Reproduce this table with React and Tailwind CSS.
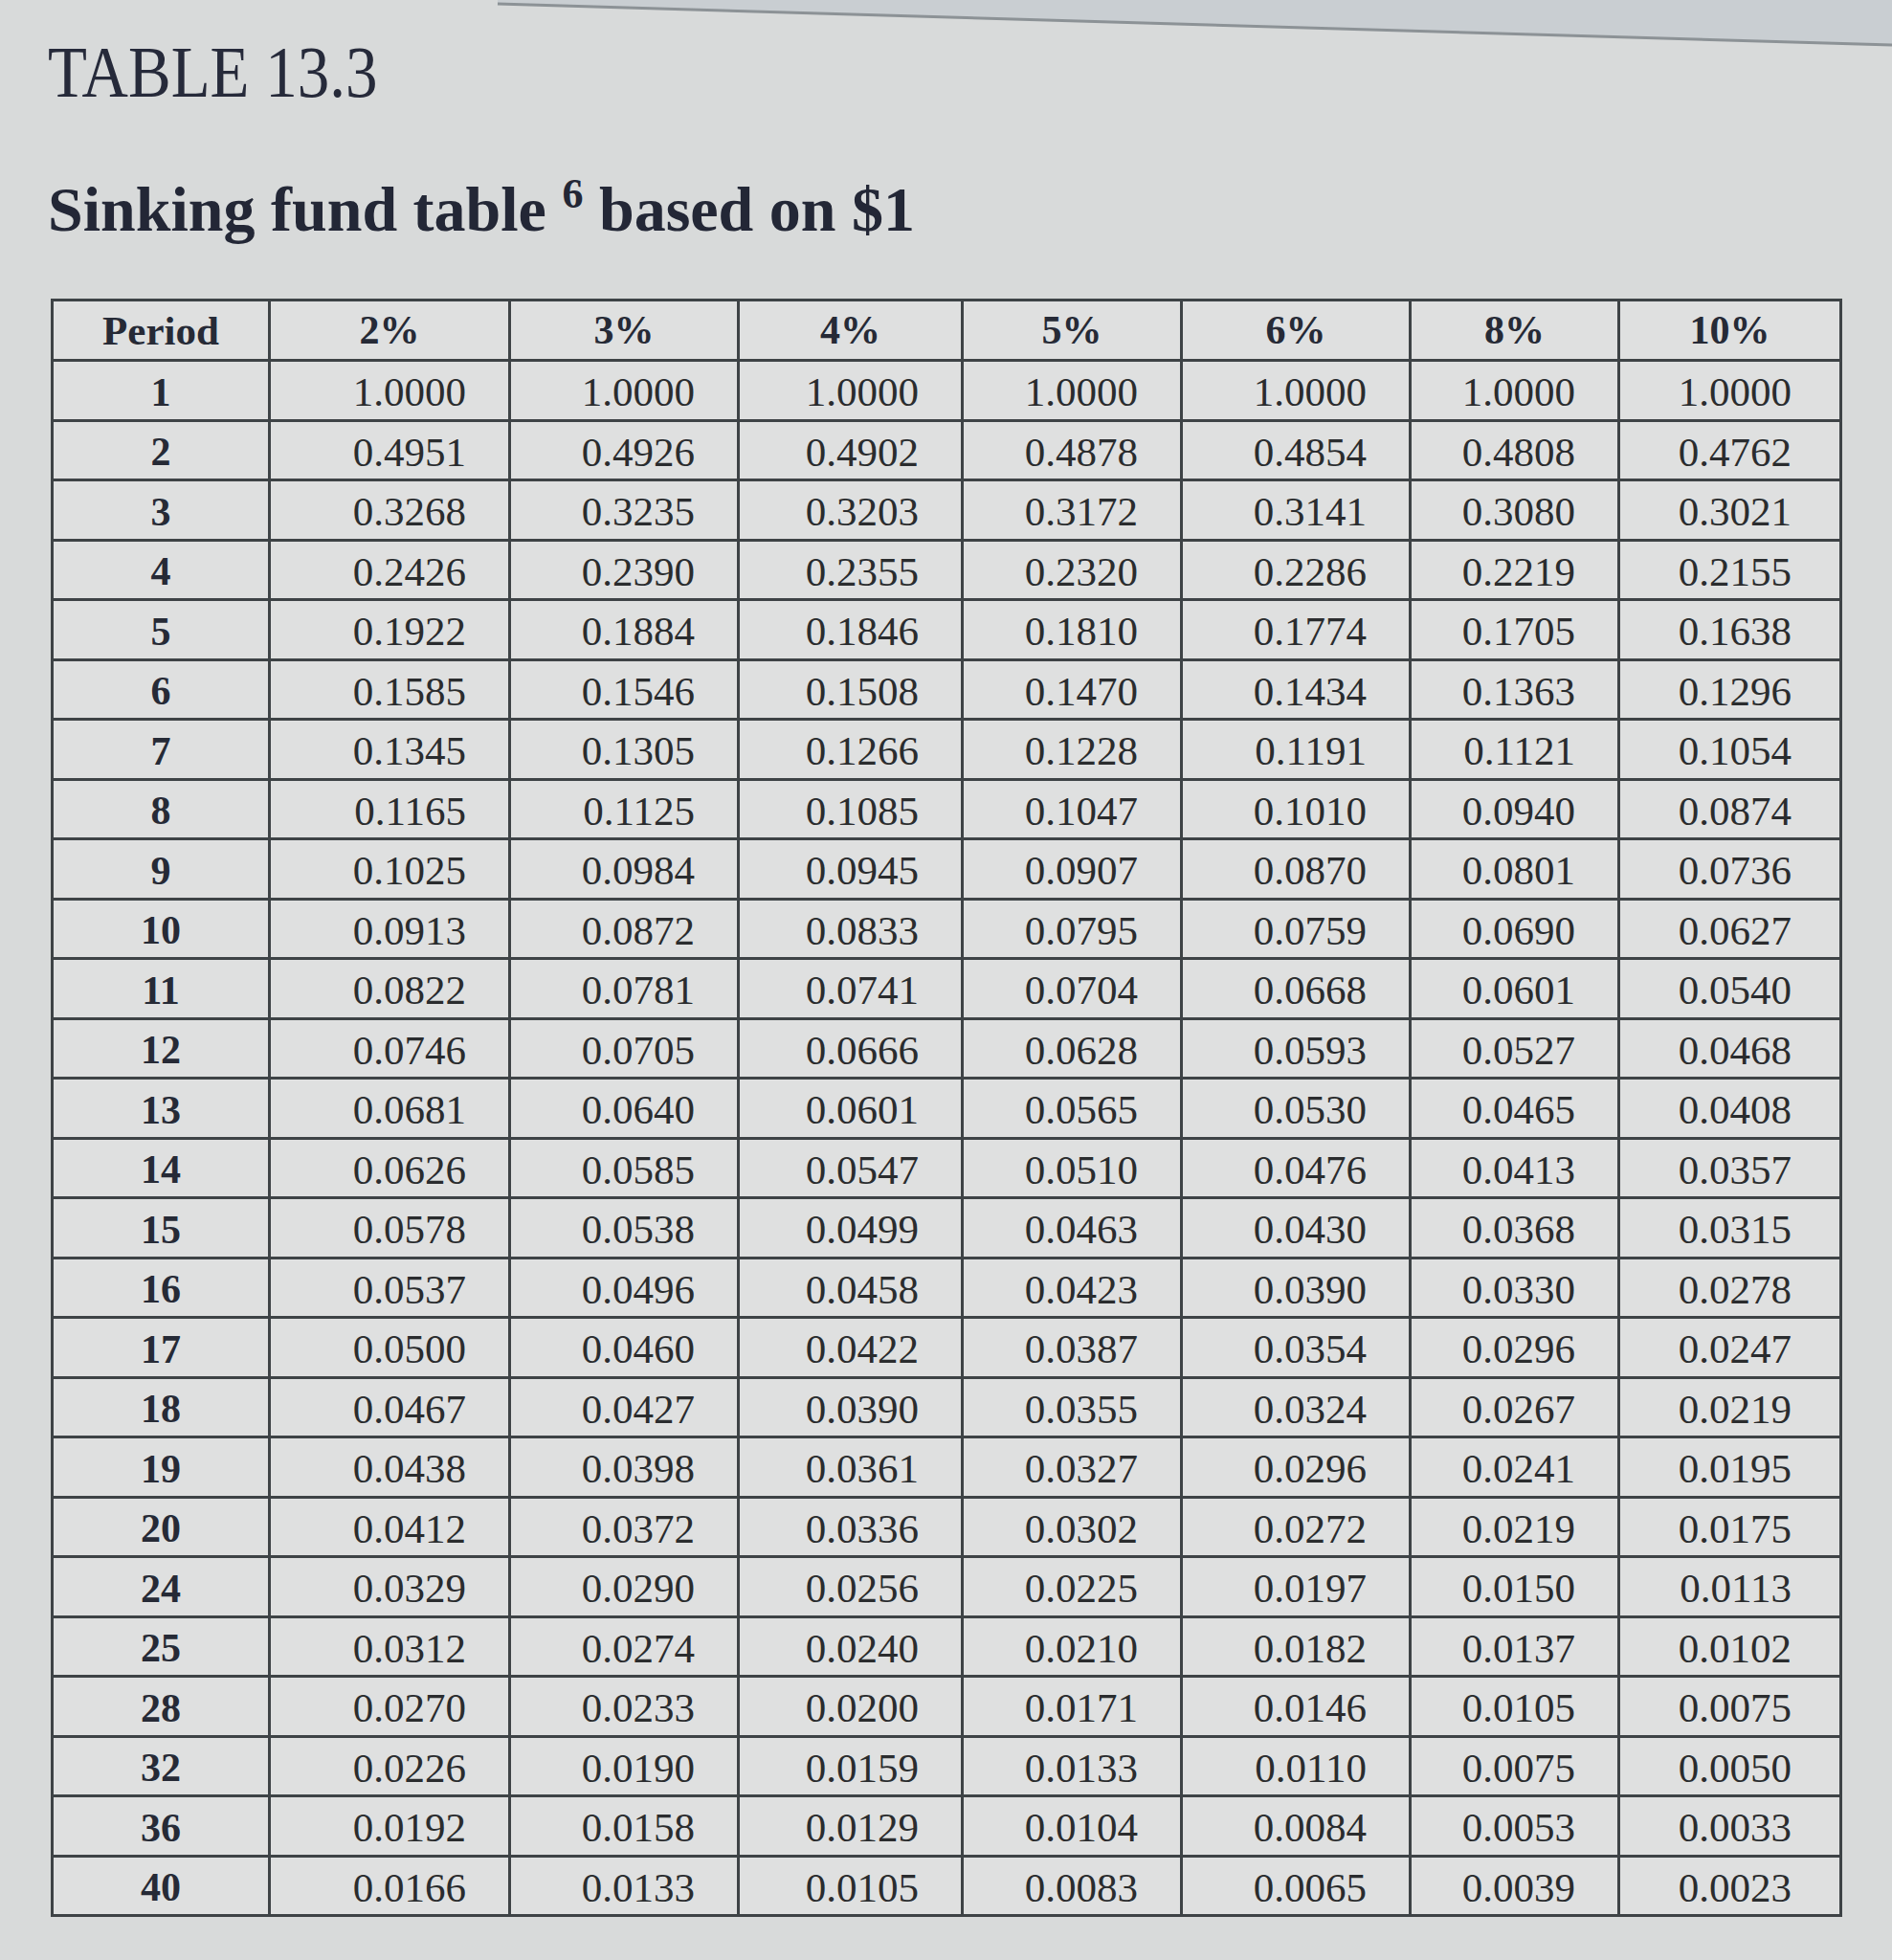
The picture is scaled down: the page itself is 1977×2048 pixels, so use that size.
import React from "react";

const headers = ["2%", "3%", "4%", "5%", "6%", "8%", "10%"];
const widths = [227, 251, 239, 234, 229, 239, 218, 232];

const rows = [
  [1, "1.0000", "1.0000", "1.0000", "1.0000", "1.0000", "1.0000", "1.0000"],
  [2, "0.4951", "0.4926", "0.4902", "0.4878", "0.4854", "0.4808", "0.4762"],
  [3, "0.3268", "0.3235", "0.3203", "0.3172", "0.3141", "0.3080", "0.3021"],
  [4, "0.2426", "0.2390", "0.2355", "0.2320", "0.2286", "0.2219", "0.2155"],
  [5, "0.1922", "0.1884", "0.1846", "0.1810", "0.1774", "0.1705", "0.1638"],
  [6, "0.1585", "0.1546", "0.1508", "0.1470", "0.1434", "0.1363", "0.1296"],
  [7, "0.1345", "0.1305", "0.1266", "0.1228", "0.1191", "0.1121", "0.1054"],
  [8, "0.1165", "0.1125", "0.1085", "0.1047", "0.1010", "0.0940", "0.0874"],
  [9, "0.1025", "0.0984", "0.0945", "0.0907", "0.0870", "0.0801", "0.0736"],
  [10, "0.0913", "0.0872", "0.0833", "0.0795", "0.0759", "0.0690", "0.0627"],
  [11, "0.0822", "0.0781", "0.0741", "0.0704", "0.0668", "0.0601", "0.0540"],
  [12, "0.0746", "0.0705", "0.0666", "0.0628", "0.0593", "0.0527", "0.0468"],
  [13, "0.0681", "0.0640", "0.0601", "0.0565", "0.0530", "0.0465", "0.0408"],
  [14, "0.0626", "0.0585", "0.0547", "0.0510", "0.0476", "0.0413", "0.0357"],
  [15, "0.0578", "0.0538", "0.0499", "0.0463", "0.0430", "0.0368", "0.0315"],
  [16, "0.0537", "0.0496", "0.0458", "0.0423", "0.0390", "0.0330", "0.0278"],
  [17, "0.0500", "0.0460", "0.0422", "0.0387", "0.0354", "0.0296", "0.0247"],
  [18, "0.0467", "0.0427", "0.0390", "0.0355", "0.0324", "0.0267", "0.0219"],
  [19, "0.0438", "0.0398", "0.0361", "0.0327", "0.0296", "0.0241", "0.0195"],
  [20, "0.0412", "0.0372", "0.0336", "0.0302", "0.0272", "0.0219", "0.0175"],
  [24, "0.0329", "0.0290", "0.0256", "0.0225", "0.0197", "0.0150", "0.0113"],
  [25, "0.0312", "0.0274", "0.0240", "0.0210", "0.0182", "0.0137", "0.0102"],
  [28, "0.0270", "0.0233", "0.0200", "0.0171", "0.0146", "0.0105", "0.0075"],
  [32, "0.0226", "0.0190", "0.0159", "0.0133", "0.0110", "0.0075", "0.0050"],
  [36, "0.0192", "0.0158", "0.0129", "0.0104", "0.0084", "0.0053", "0.0033"],
  [40, "0.0166", "0.0133", "0.0105", "0.0083", "0.0065", "0.0039", "0.0023"],
];

const cellBase =
  "border-[3px] border-[#3e4346] p-0 align-middle leading-none";

export default function App() {
  return (
    <div
      className="relative w-[1977px] h-[2048px] overflow-hidden bg-[#d8dada] text-[#26282c]"
      style={{ fontFamily: '"Liberation Serif", "Times New Roman", serif' }}
    >
      <svg
        className="absolute left-0 top-0"
        width="1977"
        height="60"
        viewBox="0 0 1977 60"
      >
        <polygon points="520,0 1977,0 1977,46 520,4" fill="#c9ced2" />
        <line x1="520" y1="4" x2="1977" y2="47" stroke="#8c9296" strokeWidth="3" />
      </svg>

      <div className="relative pl-[50px] pt-[42px]">
        <div className="h-[66px] text-[67px] leading-none text-[#262a3a]">
          <span className="inline-block scale-y-[1.14]">TABLE 13.3</span>
        </div>
        <div className="mt-[78px] h-[66px] text-[66px] leading-none font-bold text-[#232736]">
          <span className="inline-block">
            Sinking fund table{" "}
            <span className="relative top-[-24px] text-[44px]">6</span>{" "}
            based on $1
          </span>
        </div>
      </div>

      <div className="pl-[53px] pt-[60px]">
        <table className="table-fixed border-collapse border-[3px] border-[#3e4346] bg-[#dfe0e0] w-[1869px]">
          <colgroup>
            {widths.map((w, i) => (
              <col key={i} style={{ width: w }} />
            ))}
          </colgroup>
          <thead>
            <tr className="h-[63px]">
              <th className={cellBase + " text-center text-[43px] font-bold text-[#262a36]"}>
                Period
              </th>
              {headers.map((h) => (
                <th
                  key={h}
                  className={cellBase + " text-center text-[42px] font-bold text-[#262a36]"}
                >
                  {h}
                </th>
              ))}
            </tr>
          </thead>
          <tbody>
            {rows.map((r) => (
              <tr key={r[0]} className="h-[62.5px]">
                <td className={cellBase + " pt-[4px] text-center text-[42px] font-bold text-[#262a36]"}>
                  {r[0]}
                </td>
                {r.slice(1).map((v, i) => (
                  <td
                    key={i}
                    className={
                      i === 6
                        ? cellBase + " pt-[4px] pr-[50px] text-right text-[43px] text-[#2a2c2e]"
                        : cellBase + " pt-[4px] pr-[44px] text-right text-[43px] text-[#2a2c2e]"
                    }
                  >
                    {v}
                  </td>
                ))}
              </tr>
            ))}
          </tbody>
        </table>
      </div>
    </div>
  );
}
